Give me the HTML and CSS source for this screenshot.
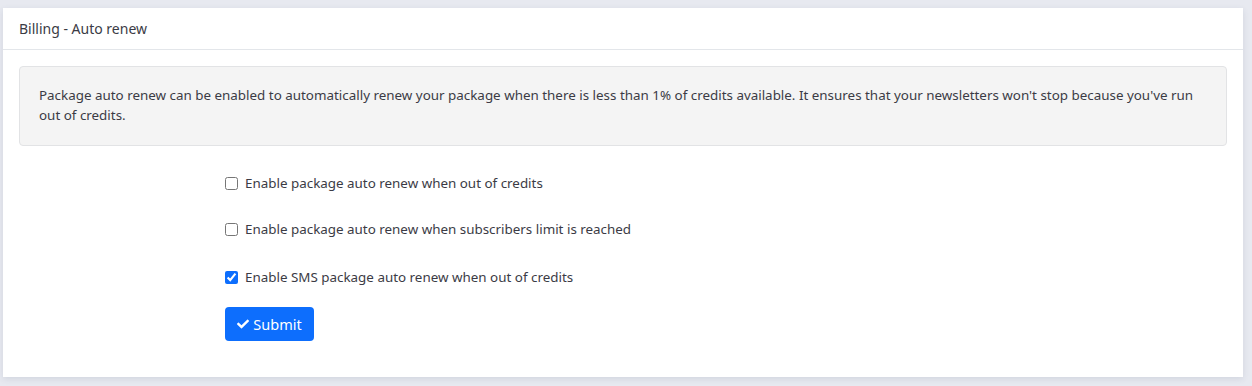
FILE: index.html
```html
<!DOCTYPE html>
<html>
<head>
<meta charset="utf-8">
<link rel="stylesheet" href="styles.css">
</head>
<body>
<div class="card">
  <div class="card-header">Billing - Auto renew</div>
  <div class="card-body">
    <div class="note">Package auto renew can be enabled to automatically renew your package when there is less than 1% of credits available. It ensures that your newsletters won't stop because you've run out of credits.</div>
    <form class="form">
      <label class="check"><input type="checkbox"><span>Enable package auto renew when out of credits</span></label>
      <label class="check"><input type="checkbox"><span>Enable package auto renew when subscribers limit is reached</span></label>
      <label class="check"><input type="checkbox" checked><span>Enable SMS package auto renew when out of credits</span></label>
      <button type="button" class="btn"><svg class="icon" viewBox="0 0 512 512" width="12" height="12"><path fill="currentColor" d="M173.9 439.4l-166.4-166.4c-10-10-10-26.2 0-36.2l36.2-36.2c10-10 26.2-10 36.2 0L192 312.7 432.1 72.6c10-10 26.2-10 36.2 0l36.2 36.2c10 10 10 26.2 0 36.2L210.1 439.4c-10 10-26.2 10-36.2 0z"/></svg>Submit</button>
    </form>
  </div>
</div>
</body>
</html>
```
FILE: styles.css
```css
html, body {
  margin: 0;
  padding: 0;
}
body {
  background: #e7e9f0;
  font-family: "Noto Sans", "Open Sans", sans-serif;
  font-size: 13.4px;
  color: #3b3b45;
  padding: 8px 9px 9px 3px;
}
.card {
  background: #fff;
  box-shadow: 0 2px 6px rgba(60, 70, 100, 0.12);
}
.card-header {
  height: 42px;
  box-sizing: border-box;
  padding: 0 16px;
  display: flex;
  align-items: center;
  font-size: 14px;
  border-bottom: 1px solid #e3e6ea;
}
.card-body {
  padding: 16px 16px 36px;
}
.note {
  background: #f4f4f4;
  border: 1px solid #e2e3e5;
  border-radius: 4px;
  padding: 19px 19px 20px;
  line-height: 19.5px;
}
.form {
  margin-left: 206px;
  padding-top: 29px;
  display: flex;
  flex-direction: column;
  align-items: flex-start;
}
.check {
  display: flex;
  align-items: center;
  height: 16px;
  margin-bottom: 30px;
}
.check:nth-child(2) {
  margin-bottom: 32px;
}
.check:nth-child(3) {
  margin-bottom: 22px;
}
.check input {
  margin: 0 7px 0 0;
  width: 13px;
  height: 13px;
  accent-color: #0d6efd;
}
.btn {
  background: #0d6efd;
  color: #fff;
  border: none;
  border-radius: 4px;
  height: 34px;
  width: 89px;
  font-family: inherit;
  font-size: 14.5px;
  display: flex;
  align-items: center;
  justify-content: center;
  gap: 4px;
  padding: 0;
}
.icon {
  display: block;
}
```
